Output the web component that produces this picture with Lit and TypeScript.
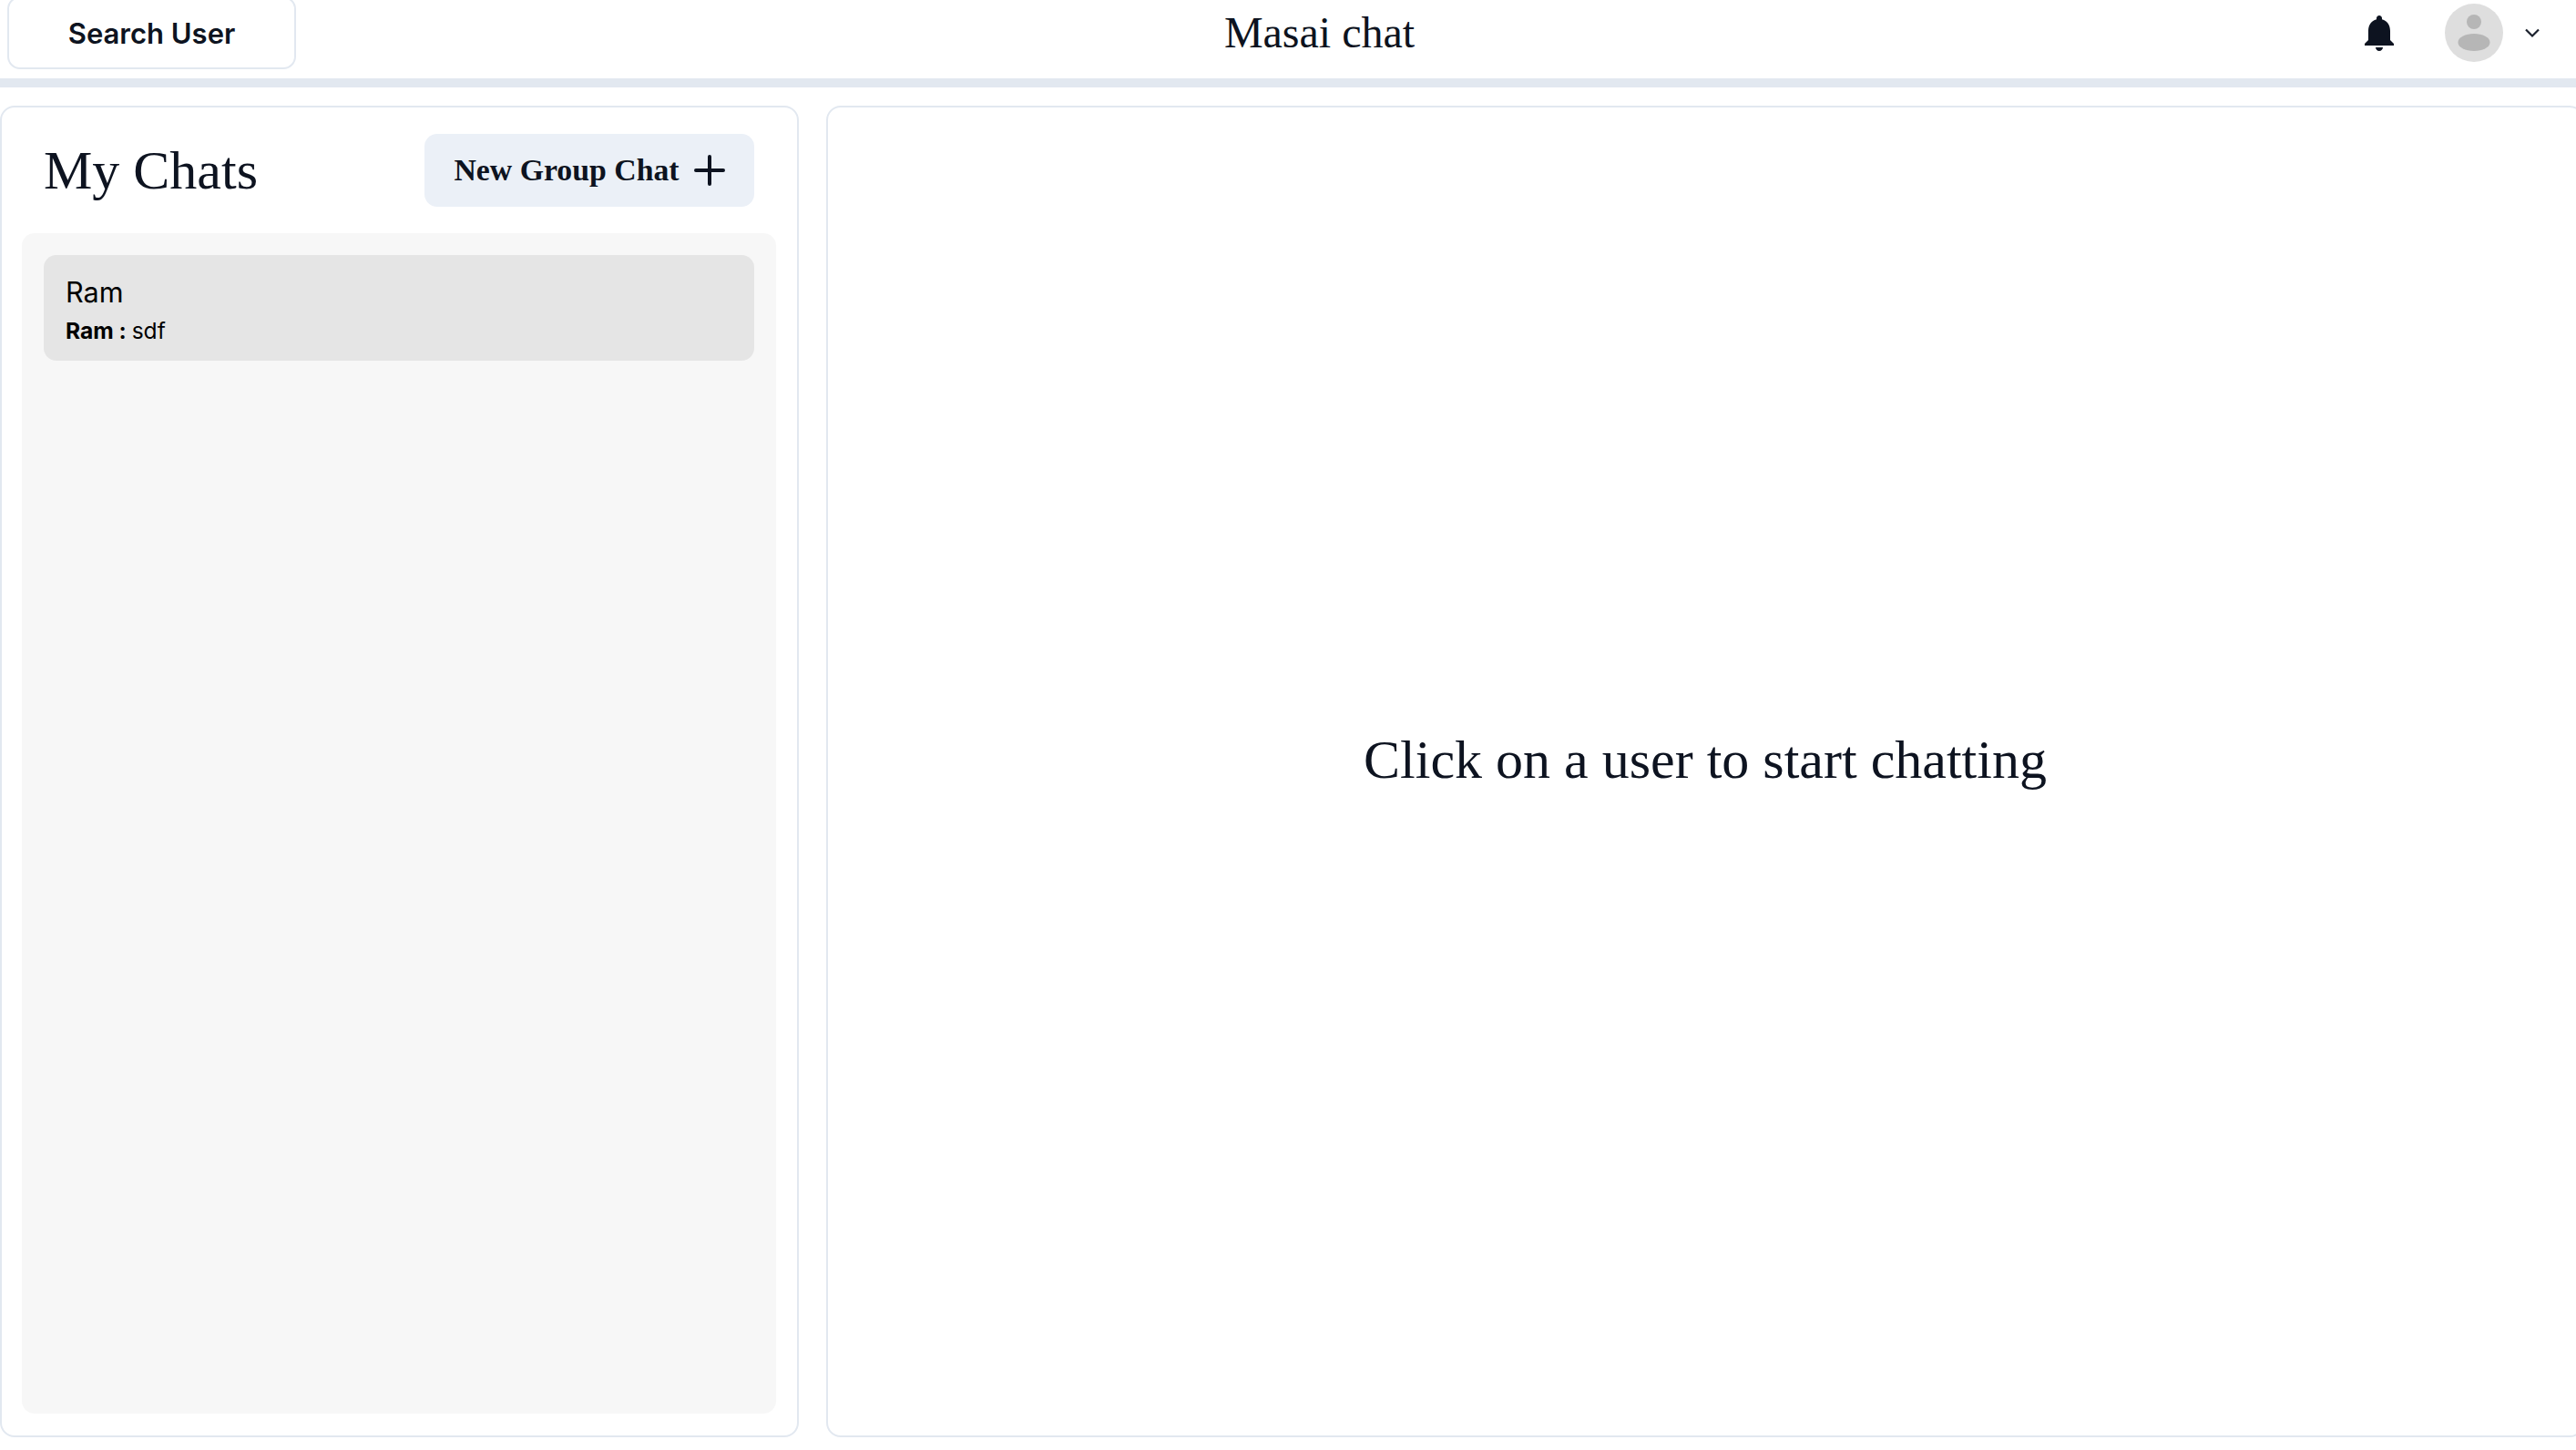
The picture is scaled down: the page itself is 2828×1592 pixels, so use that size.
import { LitElement, html, css } from "lit";
import { customElement } from "lit/decorators.js";

@customElement("app-root")
export class AppRoot extends LitElement {
  static styles = css`
    :host { display: flex; flex-direction: column; width: 2828px; height: 1592px; overflow: hidden; background: #fff; color: #0d1320; font-family: "Liberation Serif", serif; box-sizing: border-box; }
    * { box-sizing: border-box; }
    .top { height: 96px; flex: none; border-bottom: 10px solid #e2e8f0; display: flex; justify-content: space-between; align-items: flex-start; padding: 0 40px 0 8px; overflow: hidden; }
    .search { margin-top: -4px; width: 317px; height: 80px; border: 2px solid #e2e8f0; border-radius: 14px; display: flex; align-items: center; justify-content: center; font: 600 31px "Inter", sans-serif; background: #fff; }
    .brand { font-size: 48px; line-height: 72px; margin: 0; font-weight: 400; }
    .right { display: flex; align-items: center; height: 72px; }
    .bell { width: 48px; height: 48px; display: block; margin: 0 48px 0 16px; }
    .avatar { width: 64px; height: 64px; display: block; margin-right: 24px; }
    .chev { width: 16px; height: 16px; display: block; }
    .body { flex: 1; display: flex; gap: 30px; padding: 20px 0 14px; min-height: 0; }
    .side { width: 877px; flex: none; border: 2px solid #e2e8f0; border-radius: 16px; padding: 29px 23px 24px 22px; display: flex; flex-direction: column; }
    .side-head { display: flex; align-items: center; justify-content: space-between; padding: 0 24px; height: 80px; margin-bottom: 29px; flex: none; }
    h2 { margin: 0; font-size: 60px; font-weight: 400; }
    .new { width: 362px; height: 80px; border-radius: 14px; background: #ebf0f7; display: flex; align-items: center; justify-content: center; gap: 16px; font-weight: 700; font-size: 33.8px; }
    .plus { width: 34px; height: 34px; display: block; }
    .list { flex: 1; background: #f7f7f7; border-radius: 14px; padding: 24px; }
    .chat { height: 116px; background: #e5e5e5; border-radius: 14px; padding: 22px 24px; font-family: "Inter", sans-serif; color: #000; }
    .name { font-size: 30.6px; line-height: 38px; }
    .msg { font-size: 24.6px; line-height: 34px; margin-top: 6px; }
    .msg b { font-weight: 700; }
    .main { flex: none; width: 1930px; border: 2px solid #e2e8f0; border-radius: 16px; padding-bottom: 26px; display: flex; align-items: center; justify-content: center; font-size: 60px; }
  `;

  render() {
    return html`
      <div class="top">
        <div class="search">Search User</div>
        <p class="brand">Masai chat</p>
        <div class="right">
          <svg class="bell" viewBox="0 0 24 24"><path fill="#0d1320" d="M12 22c1.100 0 2-.900 2-2h-4c0 1.100.900 2 2 2zm6-6v-5c0-3.070-1.630-5.640-4.500-6.320V4c0-.830-.670-1.500-1.500-1.500s-1.500.670-1.500 1.500v.680C7.640 5.360 6 7.920 6 11v5l-2 2v1h16v-1l-2-2z"/></svg>
          <svg class="avatar" viewBox="0 0 64 64"><circle cx="32" cy="32" r="32" fill="#dedede"/><circle cx="32" cy="20" r="8" fill="#b6b6b6"/><ellipse cx="32" cy="42.500" rx="17.500" ry="9.500" fill="#b6b6b6"/></svg>
          <svg class="chev" viewBox="0 0 16 16"><path d="M1 4.500 L8 11.500 L15 4.500" fill="none" stroke="#1a202c" stroke-width="2.200"/></svg>
        </div>
      </div>
      <div class="body">
        <section class="side">
          <div class="side-head">
            <h2>My Chats</h2>
            <div class="new">New Group Chat
              <svg class="plus" viewBox="0 0 34 34"><path d="M17 2 V32 M2 17 H32" stroke="#0d1320" stroke-width="4" stroke-linecap="round"/></svg>
            </div>
          </div>
          <div class="list">
            <div class="chat">
              <div class="name">Ram</div>
              <div class="msg"><b>Ram : </b>sdf</div>
            </div>
          </div>
        </section>
        <section class="main">Click on a user to start chatting</section>
      </div>
    `;
  }
}
